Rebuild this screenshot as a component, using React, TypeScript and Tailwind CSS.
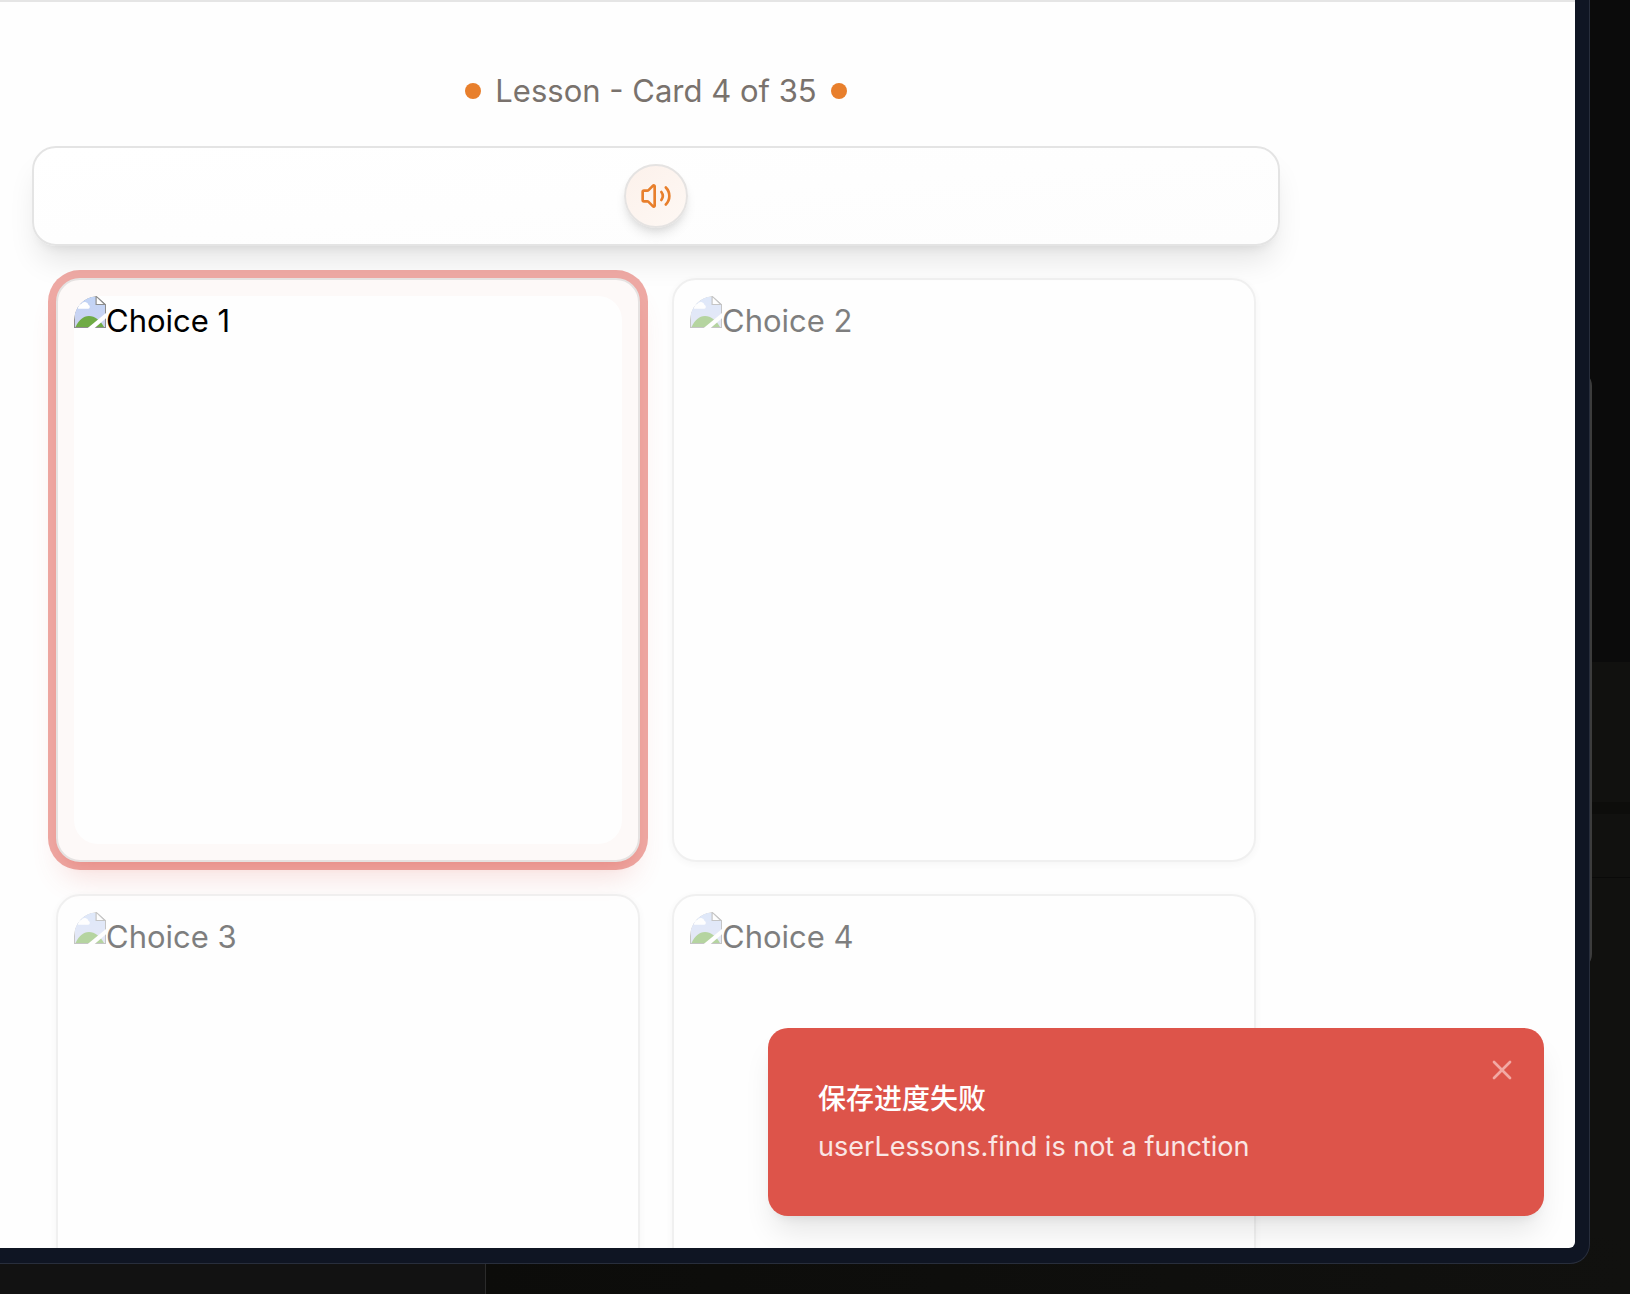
import React from "react";
import { X } from "lucide-react";

function MissingImage({ id }: { id: string }) {
  return (
    <svg className="size-8 shrink-0" viewBox="0 0 32 32" aria-hidden="true">
      <defs>
        <clipPath id={`page-${id}`}>
          <path d="M0 24A24 24 0 0 1 22.500 0L32 8.500V32H0Z" />
        </clipPath>
        <linearGradient id={`sky-${id}`} x1="0" y1="0" x2="0" y2="1">
          <stop offset="0" stopColor="#c1d4f6" />
          <stop offset="1" stopColor="#cdd3f0" />
        </linearGradient>
      </defs>
      <g clipPath={`url(#page-${id})`}>
        <rect width="32" height="32" fill="#8d8d8d" />
        <path d="M1 1H22V9H31V31H1Z" fill={`url(#sky-${id})`} />
        <path d="M4 12.700H14.300A2 2 0 0 0 14.600 8.900A3.900 3.900 0 0 0 7.400 8Q4 8.600 4 12.700Z" fill="#fff" />
        <path d="M1.500 31C5 24 9 20 15 20S26 24 30 31Z" fill="#6fab45" />
        <path d="M32 17L13.700 32H20.700L32 22.300Z" fill="#fff" />
        <path d="M21.500 0V9H32V8L23 0Z" fill="#8d8d8d" />
        <path d="M22.700 1.500V7.900H29.500Z" fill="#fff" />
      </g>
    </svg>
  );
}

function Choice({ n, wrong = false }: { n: number; wrong?: boolean }) {
  return (
    <button
      type="button"
      className={
        wrong
          ? "relative aspect-square w-full rounded-3xl border-2 border-[#e5e2e1] bg-[#fdf9f8] p-4 ring-8 ring-[#dd544a]/50 shadow-[0_20px_30px_-6px_rgba(221,83,74,0.2),0_8px_12px_-8px_rgba(221,83,74,0.2)]"
          : "relative aspect-square w-full rounded-3xl border-2 border-[#e4e4e4] bg-white p-4 opacity-50 shadow-[0_2px_6px_rgba(0,0,0,0.06)]"
      }
    >
      <span className="flex size-full items-start overflow-hidden rounded-3xl bg-[#fefefe]">
        <MissingImage id={String(n)} />
        <span className="text-[31px] leading-[50px] text-black">Choice {n}</span>
      </span>
    </button>
  );
}

function Backdrop() {
  return (
    <div className="absolute inset-0 flex flex-col" aria-hidden="true">
      <div className="h-[662px] bg-[#0b0b0b]" />
      <div className="h-[140px] bg-[#11110f]" />
      <div className="h-3 bg-[#0d0d0b]" />
      <div className="h-16 border-b border-[#0a0a09] bg-[#11110f]" />
      <div className="flex flex-1 items-end bg-[#11110f]">
        <div className="h-14 w-[486px] border-r border-[#2b2b2b] bg-[#121212]" />
        <div className="h-14 flex-1 bg-gradient-to-r from-[#0c0c0a] to-[#11110f]" />
      </div>
      <div className="absolute top-[370px] right-[38px] h-[600px] w-10 rounded-2xl border-r-2 border-[#3c3c3c]" />
    </div>
  );
}

export default function App() {
  return (
    <div className="relative h-screen overflow-hidden bg-[#0b0b0b] pr-10 pb-[30px] font-[Inter,'Noto_Sans_CJK_SC',sans-serif]">
      <Backdrop />
      <div className="relative h-full rounded-br-[20px] border-r border-b border-[#282e3c] bg-[#0f1523] pr-[14px] pb-[15px]">
        <div className="relative h-full overflow-hidden rounded-br-md border-t-2 border-[#e5e5e5] bg-[#fefefe]">
          <main className="max-w-[1312px] px-8 pt-16">
            <div className="flex items-center justify-center gap-3.5">
              <span className="size-4 rounded-full bg-[#e87f2c]" />
              <p className="text-[31px] leading-[50px] text-[#79726d]">Lesson - Card 4 of 35</p>
              <span className="size-4 rounded-full bg-[#e87f2c]" />
            </div>

            <section className="mt-[30px] flex justify-center rounded-3xl border-2 border-[#e4e4e4] bg-gradient-to-br from-white to-[#fdfdfd] p-4 shadow-[0_20px_30px_-6px_rgba(0,0,0,0.1),0_8px_12px_-8px_rgba(0,0,0,0.1)]">
              <button
                type="button"
                aria-label="Play audio"
                className="flex size-16 items-center justify-center rounded-full border-2 border-[#e5e3e2] bg-gradient-to-br from-[#fcf1eb] to-[#fef8f4] shadow-[0_8px_12px_-2px_rgba(0,0,0,0.1),0_4px_8px_-4px_rgba(0,0,0,0.1)]"
              >
                <svg
                  className="size-8 shrink-0"
                  viewBox="0 0 24 24"
                  fill="none"
                  stroke="#e87f2c"
                  strokeWidth="2"
                  strokeLinecap="round"
                  strokeLinejoin="round"
                >
                  <path d="M11 4.702a.705.705 0 0 0-1.203-.498L6.413 7.587A1.400 1.400 0 0 1 5.416 8H3a1 1 0 0 0-1 1v6a1 1 0 0 0 1 1h2.416a1.400 1.400 0 0 1 .997.413l3.383 3.384A.705.705 0 0 0 11 19.298z" />
                  <path d="M16 9a5 5 0 0 1 0 6" />
                  <path d="M19.364 18.364a9 9 0 0 0 0-12.728" />
                </svg>
              </button>
            </section>

            <div className="mt-8 grid grid-cols-2 gap-8 px-6">
              <Choice n={1} wrong />
              <Choice n={2} />
              <Choice n={3} />
              <Choice n={4} />
            </div>
          </main>

          <div
            role="alert"
            className="absolute right-[31px] bottom-8 w-[776px] rounded-[20px] bg-[#dd544a] px-[50px] pt-[51px] pb-[49px] shadow-[0_20px_30px_-6px_rgba(0,0,0,0.1),0_8px_12px_-8px_rgba(0,0,0,0.1)]"
          >
            <h2 className="text-[28px] leading-10 font-medium text-white">保存进度失败</h2>
            <p className="mt-2 text-[27px] leading-10 text-[#fae6e4]">userLessons.find is not a function</p>
            <button type="button" aria-label="Close" className="absolute top-[26px] right-[26px] text-[#f2a9a4]">
              <X className="size-8" />
            </button>
          </div>
        </div>
      </div>
    </div>
  );
}
